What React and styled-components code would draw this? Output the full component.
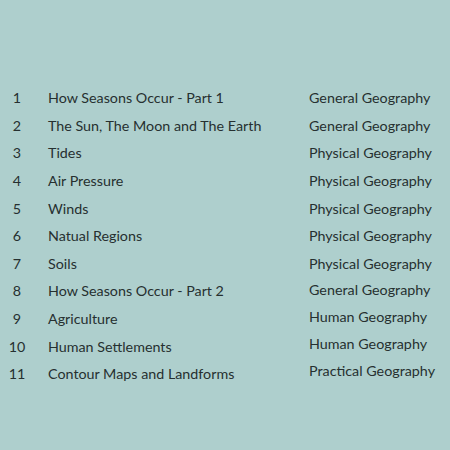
import React from "react";
import styled, { createGlobalStyle } from "styled-components";

const Global = createGlobalStyle`
  html, body { margin: 0; padding: 0; background: #aecfcd; }
  body { width: 450px; height: 450px; overflow: hidden; }
`;

const Page = styled.div`
  width: 450px;
  height: 450px;
  background: #aecfcd;
  padding-top: 84px;
  box-sizing: border-box;
  font-family: "Lato", "Liberation Sans", sans-serif;
  color: #263030;
`;

const Table = styled.div`
  display: grid;
  grid-template-columns: 34px 247px 1fr;
  column-gap: 14px;
  grid-auto-rows: 27.6px;
  align-items: center;
  font-size: 14.3px;
`;

const Num = styled.div`
  text-align: center;
`;

const Title = styled.div`
  white-space: nowrap;
`;

const Category = styled.div`
  white-space: nowrap;
  margin-top: ${(p) => -(p.$raise || 0) * 2}px;
`;

const rows = [
  ["How Seasons Occur - Part 1", "General Geography", 0],
  ["The Sun, The Moon and The Earth", "General Geography", 0],
  ["Tides", "Physical Geography", 0],
  ["Air Pressure", "Physical Geography", 0],
  ["Winds", "Physical Geography", 0],
  ["Natual Regions", "Physical Geography", 0],
  ["Soils", "Physical Geography", 0],
  ["How Seasons Occur - Part 2", "General Geography", 1],
  ["Agriculture", "Human Geography", 2],
  ["Human Settlements", "Human Geography", 3],
  ["Contour Maps and Landforms", "Practical Geography", 3],
];

export default function App() {
  return (
    <>
      <Global />
      <Page>
        <Table>
          {rows.map(([t, c, r], i) => (
            <React.Fragment key={i}>
              <Num>{i + 1}</Num>
              <Title>{t}</Title>
              <Category $raise={r}>{c}</Category>
            </React.Fragment>
          ))}
        </Table>
      </Page>
    </>
  );
}
